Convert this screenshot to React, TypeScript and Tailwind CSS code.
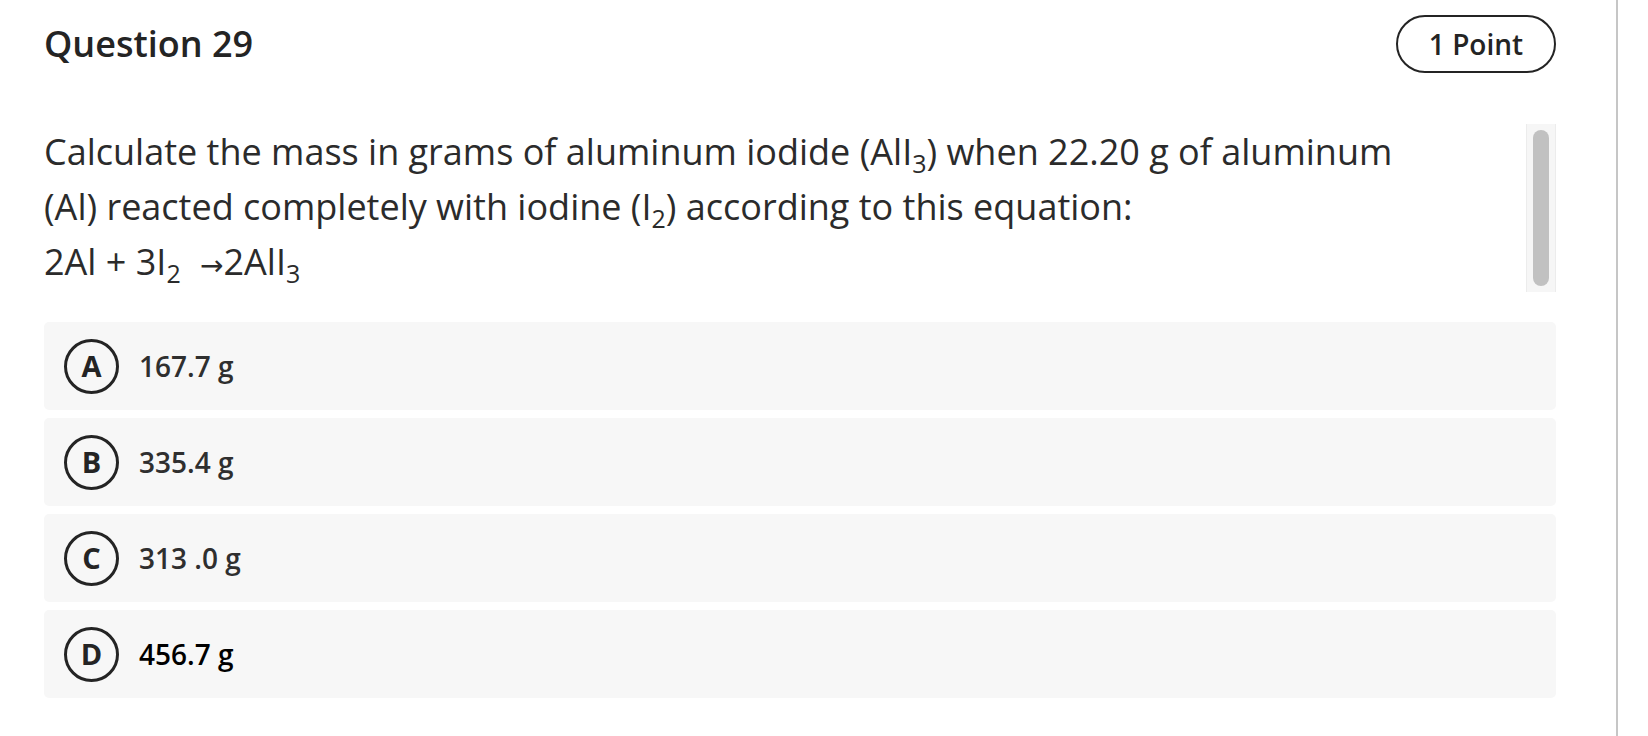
import React from "react"

const options = [
  { letter: "A", text: "167.7 g" },
  { letter: "B", text: "335.4 g" },
  { letter: "C", text: "313 .0 g" },
  { letter: "D", text: "456.7 g", strong: true },
]

function Sub({ children }: { children: React.ReactNode }) {
  return <sub className="text-[25px] bottom-[-8px]">{children}</sub>
}

export default function App() {
  return (
    <div className="flex h-[736px] w-[1648px] bg-white font-['Open_Sans',sans-serif]">
      <main className="w-[1618px] h-full border-r-2 border-[#c6c6c6] pl-[44px] pr-[60px] pt-[15px]">
        {/* header */}
        <div className="flex items-center justify-between">
          <h1 className="text-[36px] leading-none font-semibold text-[#242424]">Question 29</h1>
          <div className="w-[160px] h-[58px] rounded-full border-2 border-[#242424] flex items-center justify-center text-[28px] font-semibold text-[#242424]">
            1 Point
          </div>
        </div>

        <div className="mt-[51px] flex h-[168px] overflow-hidden">
          <div className="flex-1 text-[36px] leading-[55px] text-[#2b2b2b]">
            Calculate the mass in grams of aluminum iodide (AlI<Sub>3</Sub>) when 22.20 g of aluminum
            <br />
            (Al) reacted completely with iodine (I<Sub>2</Sub>) according to this equation:
            <br />
            2Al + 3I<Sub>2</Sub>{" "}
            <span className="relative top-[0px] ml-[10px] leading-none font-['DejaVu_Sans',sans-serif] text-[28px]">→</span>
            2AlI<Sub>3</Sub>
          </div>
          <div className="w-[30px] h-[168px] bg-[#f6f6f6] border-x border-[#ececec] flex justify-center py-[6px]">
            <div className="w-[16px] h-full rounded-full bg-[#c1c1c1]" />
          </div>
        </div>

        {/* answers */}
        <div className="mt-[30px] flex flex-col gap-[8px]">
          {options.map(o => (
            <div key={o.letter} className="h-[88px] rounded-[5px] bg-[#f7f7f7] flex items-center pl-[20px] gap-[20px]">
              <div className="w-[55px] h-[55px] rounded-full border-[3px] border-[#242424] flex items-center justify-center text-[29px] font-bold text-[#242424]">
                {o.letter}
              </div>
              <span className={o.strong ? "text-[28px] font-semibold text-black" : "text-[28px] font-semibold text-[#2f2f2f]"}>
                {o.text}
              </span>
            </div>
          ))}
        </div>
      </main>
    </div>
  )
}
